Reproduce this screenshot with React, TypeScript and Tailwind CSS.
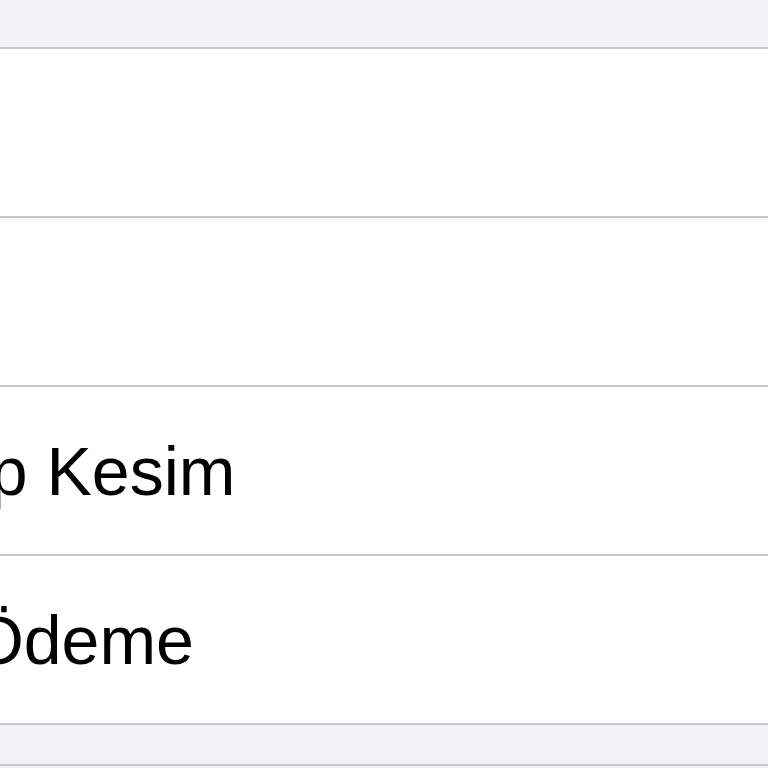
const rows = ["", "", "Hesap Kesim", "Son Ödeme"]

export default function App() {
  return (
    <div
      className="h-[768px] w-[768px] overflow-hidden bg-[#f2f2f7]"
      style={{ fontFamily: '"Liberation Sans", Arial, sans-serif' }}
    >
      <div className="h-[47px]" />
      <div className="bg-white">
        {rows.map((label, i) => (
          <div key={i} className="border-t-2 border-[#c8c7cc]">
            <div className="flex h-[167px] items-center overflow-hidden">
              <span className="ml-[-169px] whitespace-nowrap text-[68px] leading-none text-black">
                {label}
              </span>
            </div>
          </div>
        ))}
      </div>
      <div className="h-[41px] border-t-2 border-[#c8c7cc]" />
      <div className="border-t-2 border-[#c8c7cc]" />
    </div>
  )
}
